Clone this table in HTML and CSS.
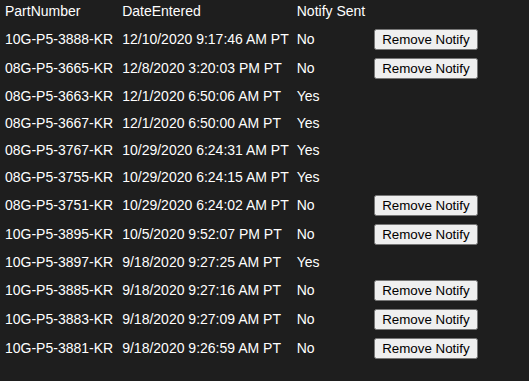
FILE: index.html
```html
<!DOCTYPE html>
<html>
<head>
<meta charset="utf-8">
<link rel="stylesheet" href="styles.css">
</head>
<body>
<table class="notify-table">
  <thead>
    <tr><th class="part">PartNumber</th><th>DateEntered</th><th>Notify Sent</th><th></th></tr>
  </thead>
  <tbody>
    <tr><td class="part">10G-P5-3888-KR</td><td>12/10/2020 9:17:46 AM PT</td><td>No</td><td class="action"><button class="btn">Remove Notify</button></td></tr>
    <tr><td class="part">08G-P5-3665-KR</td><td>12/8/2020 3:20:03 PM PT</td><td>No</td><td class="action"><button class="btn">Remove Notify</button></td></tr>
    <tr><td class="part">08G-P5-3663-KR</td><td>12/1/2020 6:50:06 AM PT</td><td>Yes</td><td class="action"></td></tr>
    <tr><td class="part">08G-P5-3667-KR</td><td>12/1/2020 6:50:00 AM PT</td><td>Yes</td><td class="action"></td></tr>
    <tr><td class="part">08G-P5-3767-KR</td><td>10/29/2020 6:24:31 AM PT</td><td>Yes</td><td class="action"></td></tr>
    <tr><td class="part">08G-P5-3755-KR</td><td>10/29/2020 6:24:15 AM PT</td><td>Yes</td><td class="action"></td></tr>
    <tr><td class="part">08G-P5-3751-KR</td><td>10/29/2020 6:24:02 AM PT</td><td>No</td><td class="action"><button class="btn">Remove Notify</button></td></tr>
    <tr><td class="part">10G-P5-3895-KR</td><td>10/5/2020 9:52:07 PM PT</td><td>No</td><td class="action"><button class="btn">Remove Notify</button></td></tr>
    <tr><td class="part">10G-P5-3897-KR</td><td>9/18/2020 9:27:25 AM PT</td><td>Yes</td><td class="action"></td></tr>
    <tr><td class="part">10G-P5-3885-KR</td><td>9/18/2020 9:27:16 AM PT</td><td>No</td><td class="action"><button class="btn">Remove Notify</button></td></tr>
    <tr><td class="part">10G-P5-3883-KR</td><td>9/18/2020 9:27:09 AM PT</td><td>No</td><td class="action"><button class="btn">Remove Notify</button></td></tr>
    <tr><td class="part">10G-P5-3881-KR</td><td>9/18/2020 9:26:59 AM PT</td><td>No</td><td class="action"><button class="btn">Remove Notify</button></td></tr>
  </tbody>
</table>
</body>
</html>
```
FILE: styles.css
```css
html, body {
  margin: 0;
  background: #1e1e1e;
  color: #ffffff;
  font-family: "Liberation Sans", Arial, sans-serif;
  font-size: 14px;
}
.notify-table {
  border-collapse: separate;
  border-spacing: 0;
  margin-left: 1px;
}
.notify-table th {
  font-weight: normal;
  text-align: left;
  line-height: 19px;
  padding: 2px 4px 4px;
  white-space: nowrap;
}
.notify-table td {
  line-height: 19px;
  padding: 4px 4px;
  white-space: nowrap;
}
.notify-table .part {
  padding-right: 5px;
}
.notify-table .action {
  padding-left: 5px;
}
.btn {
  font-family: "Liberation Sans", Arial, sans-serif;
  font-size: 13.333px;
  margin: 0;
}
```
